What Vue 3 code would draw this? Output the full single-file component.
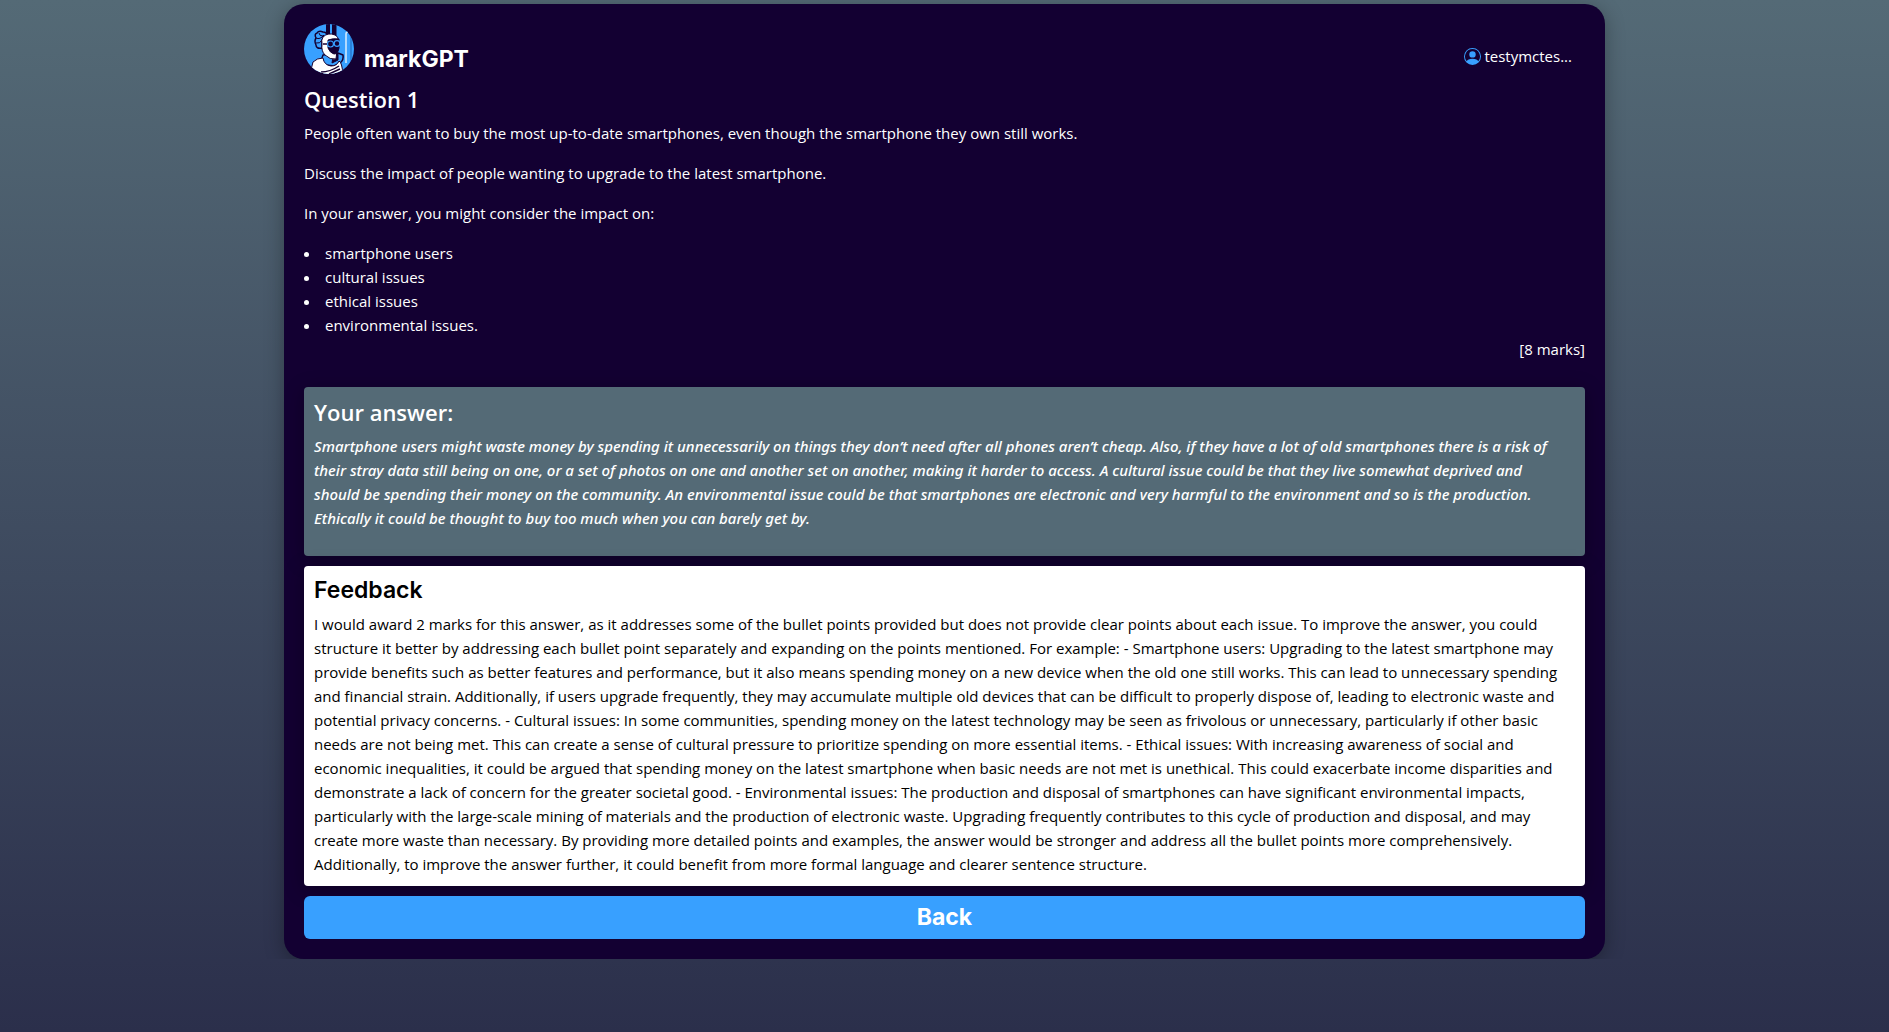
<script setup>
const issues = ['smartphone users', 'cultural issues', 'ethical issues', 'environmental issues.']

const answer = [
  'Smartphone users might waste money by spending it unnecessarily on things they don’t need after all phones aren’t cheap. Also, if they have a lot of old smartphones there is a risk of',
  'their stray data still being on one, or a set of photos on one and another set on another, making it harder to access. A cultural issue could be that they live somewhat deprived and',
  'should be spending their money on the community. An environmental issue could be that smartphones are electronic and very harmful to the environment and so is the production.',
  'Ethically it could be thought to buy too much when you can barely get by.',
].join('\n')
</script>

<template>
  <main class="card">
    <header class="top">
      <a class="brand" href="#">
        <svg class="avatar" viewBox="0 0 50 50" aria-hidden="true">
          <defs><clipPath id="round"><circle cx="25" cy="25" r="25" /></clipPath></defs>
          <g clip-path="url(#round)">
            <rect width="50" height="50" fill="#38a0ff" />
            <path d="M22 0h4v12h-4zM28 0h4.500v14h-4.500z" fill="#140032" />
            <path d="M42 39V10q0-2 2-2" fill="none" stroke="#d8ecff" stroke-width="1.500" />
            <path d="M47 12v28" stroke="#1f63b5" />
            <g stroke="#140032" stroke-linejoin="round">
              <path d="M19 31q-4 8 3 10l8 1l6-3q4-3 3-8l-5-2z" fill="#38a0ff" stroke-width="1.500" />
              <path d="M30 27l4 3v6l-6 3z" fill="#140032" />
              <path d="M12 14q-2-4 1-5q2-3 6-1q4 0 4 4l-5 4v8q-6 1-6-3q-2-4 0-7z" fill="#38a0ff" stroke-width="1.500" />
              <path d="M12 14q4 2 8-3M12 19q4 1 6-3M15 9q0 3 4 3" fill="none" />
              <path d="M19 13Q24 8 31 11Q35 13 34 18L32 35Q26 36 21 31Q17 27 18 20Q17 16 19 13z" fill="#fff" />
              <path d="M24 16q5-2 11-1v9q-1 6-5 6q-4-1-6-6z" fill="#140032" />
              <path d="M19 20l5 0" stroke-width="1.500" />
              <path d="M30 21h1" stroke="#38a0ff" />
              <circle cx="26.500" cy="20" r="3" fill="#140032" stroke="#38a0ff" stroke-width="1.200" />
              <circle cx="33" cy="19.500" r="2.800" fill="#140032" stroke="#38a0ff" stroke-width="1.200" />
              <path d="M9 38Q13 34 19 34Q20 41 27 42Q33 42 35 37Q38 38 39 51H4Q8 45 9 38z" fill="#fff" />
              <path d="M17 48q9 0 18-6M25 50l11-5" fill="none" stroke-width="1.500" />
            </g>
          </g>
        </svg>
        <span class="name">markGPT</span>
      </a>
      <a class="user" href="#">
        <svg width="17" height="17" viewBox="0 0 16 16" fill="#38a0ff" aria-hidden="true">
          <path d="M11 6a3 3 0 1 1-6 0 3 3 0 0 1 6 0z" />
          <path fill-rule="evenodd" d="M0 8a8 8 0 1 1 16 0A8 8 0 0 1 0 8zm8-7a7 7 0 0 0-5.468 11.370C3.242 11.226 4.805 10 8 10s4.757 1.225 5.468 2.370A7 7 0 0 0 8 1z" />
        </svg>
        <span>testymctes...</span>
      </a>
    </header>

    <section class="question">
      <h2>Question 1</h2>
      <p>People often want to buy the most up-to-date smartphones, even though the smartphone they own still works.</p>
      <p>Discuss the impact of people wanting to upgrade to the latest smartphone.</p>
      <p>In your answer, you might consider the impact on:</p>
      <ul>
        <li v-for="issue in issues" :key="issue">{{ issue }}</li>
      </ul>
      <p class="marks">[8 marks]</p>
    </section>

    <section class="panel answer">
      <h2>Your answer:</h2>
      <p>{{ answer }}</p>
    </section>

    <section class="panel feedback">
      <h2 class="display">Feedback</h2>
      <p>I would award 2 marks for this answer, as it addresses some of the bullet points provided but does not provide clear points about each issue. To improve the answer, you could structure it better by addressing each bullet point separately and expanding on the points mentioned. For example: - Smartphone users: Upgrading to the latest smartphone may provide benefits such as better features and performance, but it also means spending money on a new device when the old one still works. This can lead to unnecessary spending and financial strain. Additionally, if users upgrade frequently, they may accumulate multiple old devices that can be difficult to properly dispose of, leading to electronic waste and potential privacy concerns. - Cultural issues: In some communities, spending money on the latest technology may be seen as frivolous or unnecessary, particularly if other basic needs are not being met. This can create a sense of cultural pressure to prioritize spending on more essential items. - Ethical issues: With increasing awareness of social and economic inequalities, it could be argued that spending money on the latest smartphone when basic needs are not met is unethical. This could exacerbate income disparities and demonstrate a lack of concern for the greater societal good. - Environmental issues: The production and disposal of smartphones can have significant environmental impacts, particularly with the large-scale mining of materials and the production of electronic waste. Upgrading frequently contributes to this cycle of production and disposal, and may create more waste than necessary. By providing more detailed points and examples, the answer would be stronger and address all the bullet points more comprehensively. Additionally, to improve the answer further, it could benefit from more formal language and clearer sentence structure.</p>
    </section>

    <button class="back" type="button">Back</button>
  </main>
</template>

<style>
html {
  min-height: 100%;
  background: linear-gradient(#546a76, #2b2f4b);
}
</style>

<style scoped>
.card {
  box-sizing: border-box;
  max-width: 1321px;
  margin: 4px auto 0;
  padding: 20px;
  border-radius: 20px;
  background: #130032;
  box-shadow: 0 4px 20px rgba(0, 0, 0, 0.3);
  color: #fff;
  font: 15px/24px "Open Sans", "Noto Sans", sans-serif;
}
.top {
  display: flex;
  align-items: center;
  justify-content: space-between;
  margin-bottom: 10px;
}
a {
  color: inherit;
  text-decoration: none;
}
.brand {
  display: flex;
  align-items: flex-end;
  gap: 10px;
}
.avatar {
  width: 50px;
  height: 50px;
}
.name {
  font: 700 23px/30px Inter, sans-serif;
}
.user {
  display: flex;
  align-items: center;
  gap: 3px;
  margin: 14px 13px 0 0;
}
h2 {
  margin: 0 0 7px;
  font-size: 22px;
  line-height: 30px;
  font-weight: 600;
}
p {
  margin: 0 0 16px;
}
ul {
  margin: 0;
  padding: 0;
  list-style-position: inside;
}
.marks {
  margin-bottom: 26px;
  text-align: right;
}
.panel {
  margin-bottom: 10px;
  padding: 10px;
  border-radius: 4px;
  box-shadow: 0 4px 20px rgba(0, 0, 0, 0.3);
}
.answer {
  background: #546a76;
}
.answer p {
  font-family: "Noto Sans", "Open Sans", sans-serif;
  font-style: italic;
  font-weight: 500;
  white-space: pre-line;
}
.feedback {
  background: #fff;
  color: #000;
}
.feedback p {
  margin-bottom: 0;
}
.display {
  margin-bottom: 8px;
  font: 600 23px/28px Inter, sans-serif;
}
.back {
  display: block;
  width: 100%;
  height: 43px;
  padding: 0 0 2px;
  border: 0;
  border-radius: 6px;
  background: #38a0ff;
  color: #fff;
  font: 700 23px/28px Inter, sans-serif;
}
</style>
